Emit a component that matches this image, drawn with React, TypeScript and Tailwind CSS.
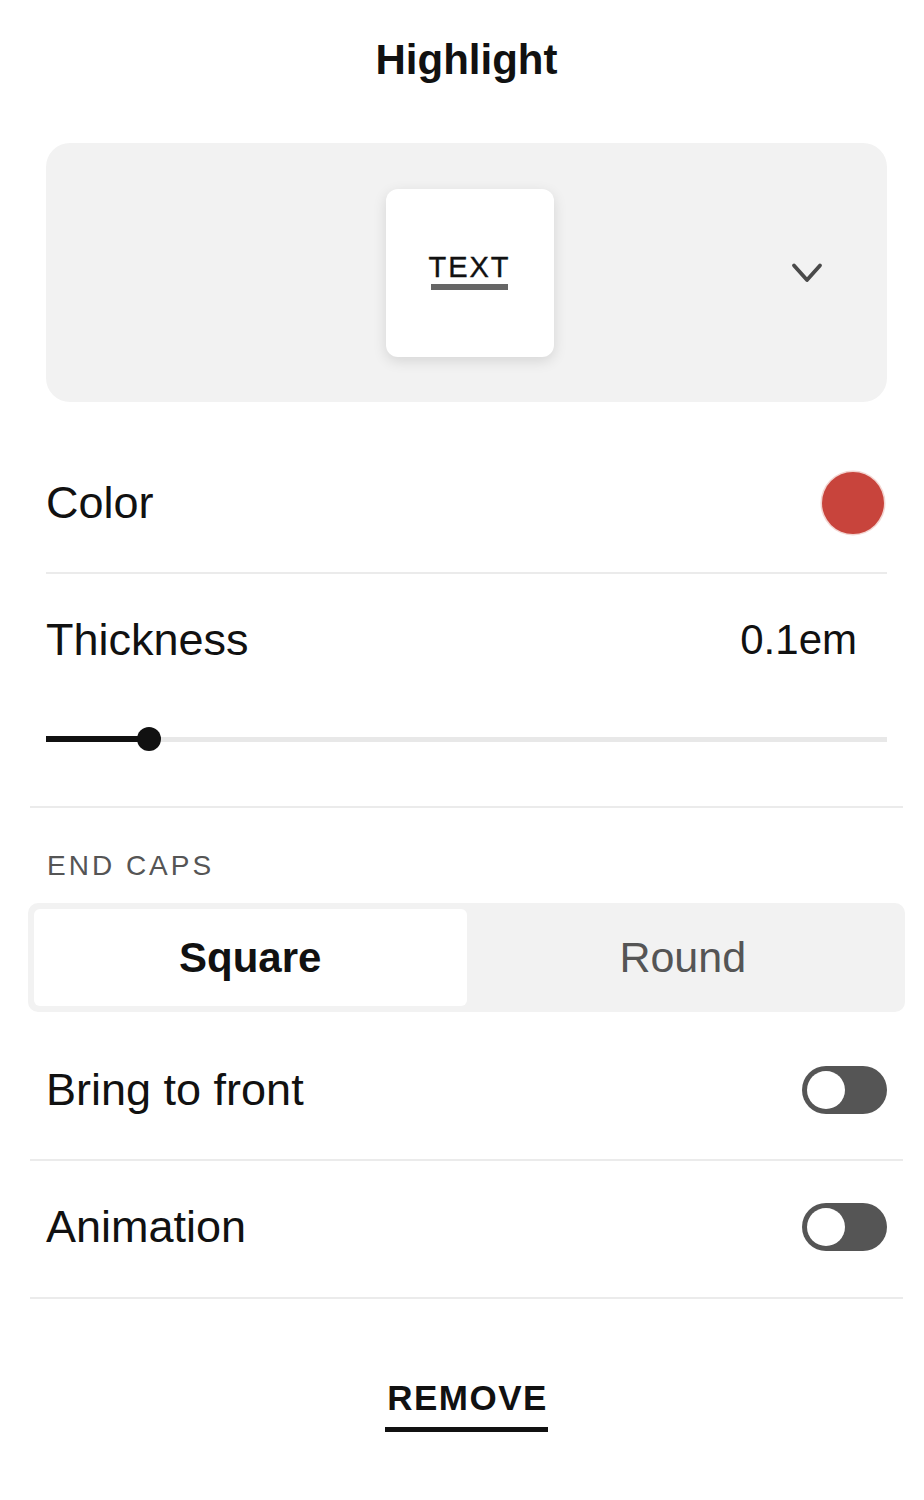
import { useState } from "react";

const Toggle = ({ on }: { on: boolean }) => (
  <div
    className={
      on
        ? "flex h-[48px] w-[85px] items-center justify-end rounded-full bg-[#111] px-[5px]"
        : "flex h-[48px] w-[85px] items-center rounded-full bg-[#555] px-[5px]"
    }
  >
    <div className="size-[38px] rounded-full bg-white" />
  </div>
);

const Chevron = () => (
  <svg width="32" height="22" viewBox="0 0 32 22" fill="none">
    <path
      d="M3 3.5 L16 18 L29 3.5"
      stroke="#4a4a4a"
      strokeWidth="3.8"
      strokeLinecap="round"
      strokeLinejoin="round"
    />
  </svg>
);

export default function App() {
  const [caps, setCaps] = useState<"square" | "round">("square");

  return (
    <div className="min-h-[1500px] bg-white font-['Liberation_Sans',Arial,sans-serif] text-[#111]">
      <div className="ml-[30px] w-[873px] pt-[35px]">
        <h1 className="h-[50px] text-center text-[42px] font-bold leading-[50px]">
          Highlight
        </h1>

        <div className="px-[16px]">
          {/* style preview */}
          <div className="mt-[58px] grid h-[259px] grid-cols-[1fr_auto_1fr] items-center rounded-[24px] bg-[#f2f2f2] pl-[6px]">
            <div />
            <div className="flex size-[168px] flex-col items-center justify-center rounded-[12px] bg-white shadow-[0_4px_14px_rgba(0,0,0,0.12)]">
              <span className="-mt-[4px] text-[29px] leading-[32px] tracking-[2px] text-[#111] [-webkit-text-stroke:0.4px_#111]">
                TEXT
              </span>
              <div className="mt-[1px] h-[6px] w-[77px] bg-[#666]" />
            </div>
            <div className="flex justify-end pr-[64px]">
              <Chevron />
            </div>
          </div>

          <div className="flex h-[172px] items-center justify-between border-b-2 border-[#ebebeb] pt-[32px]">
            <span className="text-[45px] leading-[52px]">Color</span>
            <div className="mr-[3px] size-[62px] rounded-full bg-[#c8443c] shadow-[0_0_0_1.5px_#f3d5d1]" />
          </div>

          <div className="mt-[40px] flex h-[52px] items-center justify-between">
            <span className="text-[45px] leading-[52px]">Thickness</span>
            <span className="pr-[30px] text-[42px] leading-[52px]">0.1em</span>
          </div>

          {/* slider */}
          <div className="mt-[61px] flex h-[24px] items-center">
            <div className="h-[6px] w-[92px] bg-[#111]" />
            <div className="-ml-[1px] size-[24px] shrink-0 rounded-full bg-[#111]" />
            <div className="h-[5px] flex-1 bg-[#e8e8e8]" />
          </div>
        </div>

        <div className="mt-[55px] h-[2px] bg-[#ebebeb]" />

        <div className="mt-[41px] px-[17px] text-[28px] leading-[34px] tracking-[3px] text-[#555]">
          END CAPS
        </div>

        <div className="-mx-[2px] mt-[20px] grid h-[109px] grid-cols-2 rounded-[10px] bg-[#f2f2f2] p-[6px]">
          <button
            onClick={() => setCaps("square")}
            className={
              caps === "square"
                ? "rounded-[6px] bg-white text-[42px] font-bold text-[#111]"
                : "rounded-[6px] text-[43px] text-[#555]"
            }
          >
            Square
          </button>
          <button
            onClick={() => setCaps("round")}
            className={
              caps === "round"
                ? "rounded-[6px] bg-white text-[42px] font-bold text-[#111]"
                : "rounded-[6px] text-[43px] text-[#555]"
            }
          >
            Round
          </button>
        </div>

        <div className="mt-[54px] flex h-[48px] items-center justify-between px-[16px]">
          <span className="text-[45px] leading-[52px]">Bring to front</span>
          <Toggle on={false} />
        </div>
        <div className="mt-[45px] h-[2px] bg-[#ebebeb]" />

        <div className="mt-[42px] flex h-[48px] items-center justify-between px-[16px]">
          <span className="text-[45px] leading-[52px]">Animation</span>
          <Toggle on={false} />
        </div>
        <div className="mt-[46px] h-[2px] bg-[#ebebeb]" />

        <div className="mt-[79px] flex justify-center">
          <button className="border-b-[5px] border-[#111] pb-[9px] pl-[2px] text-[35px] font-semibold leading-[40px] tracking-[1.5px] text-[#111]">
            REMOVE
          </button>
        </div>
      </div>
    </div>
  );
}
